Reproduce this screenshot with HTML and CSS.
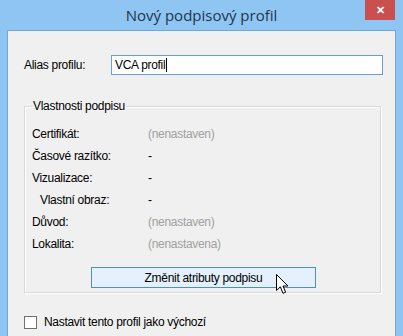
FILE: index.html
```html
<!DOCTYPE html>
<html lang="cs">
<head>
  <meta charset="UTF-8">
  <title>Nový podpisový profil</title>
  <meta name="viewport" content="width=device-width, initial-scale=1.0">
  <link rel="stylesheet" href="styles.css">
</head>
<body>

  <div class="window">
    <div class="titlebar">
      <span class="title">Nový podpisový profil</span>
      <span class="close">&#x2715;</span>
    </div>

    <div class="content">
      <div class="alias-row">
        <label class="alias-label" for="alias">Alias profilu:</label>
        <div class="input"><span>VCA profil</span><span class="caret"></span></div>
      </div>

      <fieldset class="group">
        <legend>Vlastnosti podpisu</legend>
        <div class="row"><span class="key">Certifikát:</span><span class="val muted">(nenastaven)</span></div>
        <div class="row"><span class="key">Časové razítko:</span><span class="val">-</span></div>
        <div class="row"><span class="key">Vizualizace:</span><span class="val">-</span></div>
        <div class="row"><span class="key sub">Vlastní obraz:</span><span class="val">-</span></div>
        <div class="row"><span class="key">Důvod:</span><span class="val muted">(nenastaven)</span></div>
        <div class="row"><span class="key">Lokalita:</span><span class="val muted">(nenastavena)</span></div>

        <div class="btn-row">
          <button class="btn">Změnit atributy podpisu</button>
          <svg class="cursor" width="14" height="21" viewBox="0 0 14 21">
            <path d="M0.5 0.5 L0.5 16.5 L4.3 12.8 L7 19.3 L9.6 18.2 L7 12 L12 12 Z" fill="#fff" stroke="#000" stroke-width="1" stroke-linejoin="miter"/>
          </svg>
        </div>
      </fieldset>

      <div class="check-row">
        <span class="checkbox"></span>
        <span>Nastavit tento profil jako výchozí</span>
      </div>
    </div>
  </div>

</body>
</html>
```

FILE: styles.css
```css
body {
  margin: 0;
  font-family: 'Liberation Sans', Arial, sans-serif;
  font-size: 12px;
  color: #000;
  background: #8ec5f3;
}

.window {
  width: 403px;
  height: 336px;
  background: #8ec5f3;
  display: flex;
  flex-direction: column;
  overflow: hidden;
}

.titlebar {
  height: 30px;
  display: flex;
  align-items: center;
  justify-content: center;
  position: relative;
}

.title {
  font-family: 'Open Sans', 'Noto Sans', sans-serif;
  font-size: 15px;
  color: #23354a;
  margin-top: -1px;
}

.close {
  position: absolute;
  top: 0;
  right: 8px;
  width: 30px;
  height: 20px;
  background: #c9504f;
  color: #fff;
  font-size: 11px;
  font-weight: bold;
  display: flex;
  align-items: center;
  justify-content: center;
}

.content {
  flex: 1;
  margin: 0 7px 0 7px;
  border: 1px solid #6fa8dc;
  border-bottom: none;
  background: #f0f0f0;
  box-shadow: inset -3px 0 0 #f5ede8;
  padding: 0 12px 0 16px;
}

.alias-row {
  display: flex;
  align-items: center;
  margin-top: 24px;
}

.alias-label {
  width: 87px;
  letter-spacing: -0.3px;
}

.input {
  flex: 1;
  height: 18px;
  border: 1px solid #6b9fd4;
  background: #fff;
  display: flex;
  align-items: center;
  padding-left: 3px;
  letter-spacing: -0.3px;
}

.caret {
  width: 1px;
  height: 14px;
  background: #000;
  margin-left: 1px;
}

.group {
  margin: 24px 0 0 0;
  padding: 10px 0 4px 7px;
  border: 1px solid #d8d8d8;
  box-shadow: 1px 1px 0 #fff, inset 1px 1px 0 #fff;
  width: 357px;
  box-sizing: border-box;
}

.group legend {
  padding: 0 1px;
  margin-left: 0;
  letter-spacing: -0.3px;
}

.row {
  display: flex;
  height: 22px;
  align-items: center;
  letter-spacing: -0.3px;
}

.key {
  width: 116px;
}

.key.sub {
  padding-left: 8px;
  width: 108px;
}

.muted {
  color: #a0a0a0;
}

.btn-row {
  display: flex;
  margin-top: 12px;
  padding-left: 59px;
  position: relative;
}

.btn {
  width: 225px;
  height: 21px;
  border: 1px solid #4f8fc8;
  background: #e4f0fb;
  font-family: 'Liberation Sans', Arial, sans-serif;
  font-size: 12px;
  letter-spacing: -0.3px;
  padding: 0;
  color: #000;
}

.cursor {
  position: absolute;
  left: 244px;
  top: 7px;
}

.check-row {
  display: flex;
  align-items: center;
  margin-top: 22px;
  letter-spacing: -0.3px;
}

.checkbox {
  width: 11px;
  height: 11px;
  border: 1px solid #707070;
  background: #fff;
  margin-right: 7px;
}
```
